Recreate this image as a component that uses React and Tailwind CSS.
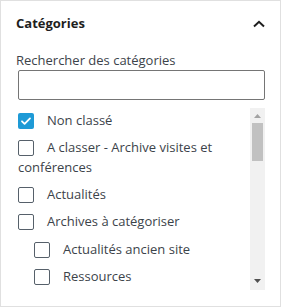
import React from 'react';

const terms = [
  { name: 'Non classé', checked: true },
  { name: 'A classer - Archive visites et conférences' },
  { name: 'Actualités' },
  {
    name: 'Archives à catégoriser',
    children: [{ name: 'Actualités ancien site' }, { name: 'Ressources' }],
  },
];

function Checkbox({ checked }) {
  if (checked) {
    return (
      <span className="inline-flex items-center justify-center align-middle w-4 h-4 mr-[13px] -mt-[2px] rounded-[2px] bg-[#1e9ad6]">
        <svg viewBox="0 0 16 16" className="w-4 h-4" fill="none">
          <path d="M4 8.3l2.6 2.5L12 5.4" stroke="#fff" strokeWidth="1.8" strokeLinecap="round" strokeLinejoin="round" />
        </svg>
      </span>
    );
  }
  return (
    <span className="inline-block align-middle w-4 h-4 mr-[13px] -mt-[2px] rounded-[2px] border-[1.5px] border-[#56606a] bg-white" />
  );
}

function Term({ term }) {
  return (
    <div className="mb-[7px]">
      <div className="text-[13px] leading-5 text-[#3c434a]">
        <Checkbox checked={term.checked} />
        {term.name}
      </div>
      {term.children && (
        <div className="ml-4 mt-[8px]">
          {term.children.map((c) => (
            <Term key={c.name} term={c} />
          ))}
        </div>
      )}
    </div>
  );
}

// fake classic scrollbar, the headless browser hides the real one
function Scrollbar() {
  return (
    <div className="w-[15px] h-[182px] bg-[#f1f1f1] flex flex-col items-center">
      <svg viewBox="0 0 7 4" className="w-[7px] h-1 mt-[6px]">
        <path d="M0 4L3.5 0 7 4z" fill="#a3a3a3" />
      </svg>
      <div className="w-[11px] h-[38px] mt-[5px] bg-[#c1c1c1]" />
      <div className="flex-1" />
      <svg viewBox="0 0 7 4" className="w-[7px] h-1 mb-[7px]">
        <path d="M0 0h7L3.5 4z" fill="#505050" />
      </svg>
    </div>
  );
}

export default function App() {
  return (
    <div className="w-[281px] h-[307px] bg-white font-['Open_Sans',sans-serif]">
      <div className="w-[281px] h-[307px] border border-[#e0e0e0] flex flex-col">
        <div className="h-[46px] flex items-center justify-between pl-[15px] pr-[15px]">
          <h2 className="text-[13px] font-bold text-[#1e1e1e]">Catégories</h2>
          <svg viewBox="0 0 12 8" className="w-3 h-2" fill="none">
            <path d="M1 6.5L6 1.8l5 4.7" stroke="#1e1e1e" strokeWidth="2" />
          </svg>
        </div>
        <div className="pl-[17px] pr-[15px]">
          <label className="block text-[13px] leading-4 text-[#3c434a] mt-[5px] -ml-[2px]">
            Rechercher des catégories
          </label>
          <input
            type="text"
            className="block w-full h-[30px] mt-[2px] rounded-[2px] border border-[#757575] bg-white"
          />
          <div className="mt-2 flex">
            <div className="flex-1 h-[182px] overflow-hidden pt-[2px]">
              {terms.map((t) => (
                <Term key={t.name} term={t} />
              ))}
            </div>
            <Scrollbar />
          </div>
        </div>
      </div>
    </div>
  );
}
